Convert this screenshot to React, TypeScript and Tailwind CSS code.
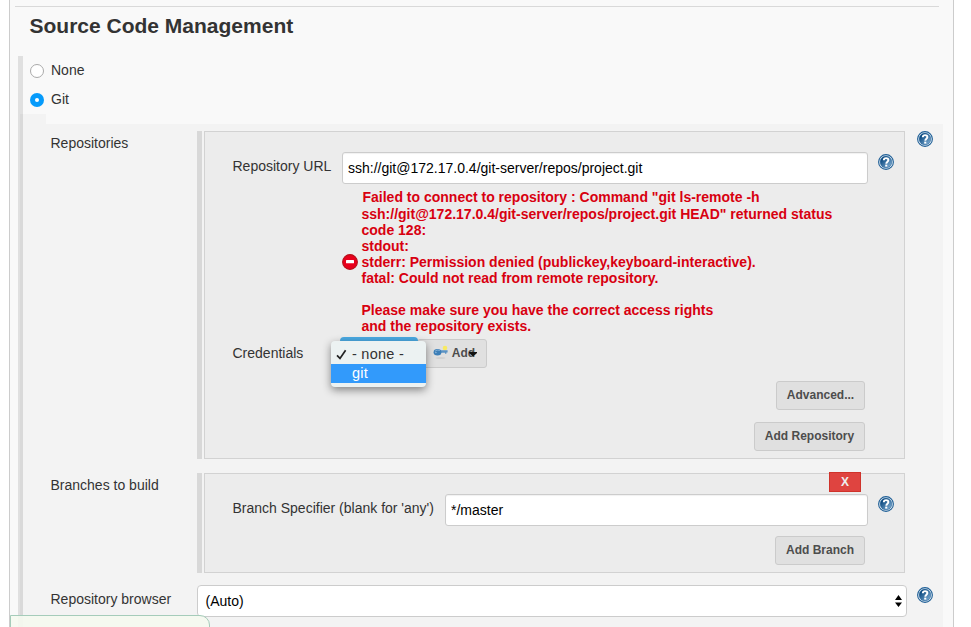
import type { ReactNode } from "react";

function Help() {
  return (
    <svg width="16" height="16" viewBox="0 0 16 16" className="block shrink-0">
      <defs>
        <linearGradient id="help" x1="0" y1="0" x2="1" y2="1">
          <stop offset="0.2" stopColor="#0c4a80" />
          <stop offset="1" stopColor="#8db9dd" />
        </linearGradient>
      </defs>
      <circle cx="8" cy="8" r="7.4" fill="#f4f8fb" stroke="#1f5f96" strokeWidth="1.1" />
      <circle cx="8" cy="8" r="5.9" fill="url(#help)" stroke="#1f5f96" strokeWidth="0.5" />
      <path d="M5.8 6.2C5.8 3.4 10.5 3.5 10.4 6.1C10.4 7.7 8.3 7.7 8.3 9.7" fill="none" stroke="#fff" strokeWidth="1.9" />
      <rect x="7.2" y="10.6" width="2.1" height="2" fill="#fff" />
    </svg>
  );
}

function ErrorIcon() {
  return (
    <svg width="16" height="16" viewBox="0 0 16 16" className="block shrink-0">
      <circle cx="8" cy="8" r="7.4" fill="#e8001c" stroke="#b5121b" strokeWidth="1.1" />
      <rect x="4" y="6" width="8" height="3.2" rx="0.5" fill="#fff" />
    </svg>
  );
}

function KeyIcon() {
  return (
    <svg width="16" height="16" viewBox="0 0 16 16" className="block shrink-0">
      <ellipse cx="7.5" cy="13" rx="5" ry="0.7" fill="#cccccc" />
      <circle cx="12" cy="3" r="2.3" fill="#f8ea62" />
      <path d="M6 5.3H14.6V7.6H13.4V8.8H12V7.8H6Z" fill="#5b93c4" />
      <ellipse cx="4.5" cy="7.3" rx="3.9" ry="3.2" fill="#3d7fb8" />
      <path d="M2 6.2Q4 4.4 7 5.4" fill="none" stroke="#86b3d8" strokeWidth="0.9" />
      <circle cx="2.9" cy="7.6" r="0.7" fill="#a9c9e2" />
    </svg>
  );
}

function Button({ children, className = "" }: { children: ReactNode; className?: string }) {
  return (
    <button className={`flex h-[29px] items-center justify-center rounded-[3px] border border-[#cbcbcb] bg-[#e0e0e0] pb-px text-[12px] font-bold text-[#4d4d4d] ${className}`}>
      {children}
    </button>
  );
}

function Chunk({ children, className = "" }: { children: ReactNode; className?: string }) {
  return (
    <div className={`flex w-[708px] gap-[2px] ${className}`}>
      <div className="w-[5px] bg-[#d8d8d8]" />
      <div className="flex-1 border border-[#d2d2d2] bg-[#ececec]">{children}</div>
    </div>
  );
}

const field = "h-8 rounded-[3px] border border-[#ccc] bg-white px-[5px] text-[14px] text-black shadow-[inset_0_1px_1px_rgba(0,0,0,0.06)]";

export default function App() {
  return (
    <div className="h-[627px] w-[971px] overflow-hidden bg-white pl-[9px] font-['Liberation_Sans',Arial,sans-serif] text-[14px] leading-4 text-[#333]">
      <div className="relative h-full w-[945px] border-x border-[#ccc] bg-[#f9f9f9] pt-[6px]">
        <div className="ml-[5px] h-px w-[924px] bg-[#d9d9d9]" />
        <h1 className="ml-[19.5px] mt-[7px] h-6 whitespace-nowrap text-[21px] font-bold leading-6">Source Code Management</h1>

        <div className="mt-[18px] flex">
          <div className="ml-2 h-[571px] w-[5px] shrink-0 bg-[#e0e0e0] pl-[2px] pt-[58px]">
            <div className="h-full bg-[#d9d9d9]" />
          </div>
          <div className="w-[920px]">
            <div className="flex h-[58px] flex-col pl-[7px] pt-[5px]">
              <label className="flex h-[18px] items-center gap-[7px]">
                <span className="mt-px size-[14px] rounded-full border border-[#aaa] bg-white" />
                None
              </label>
              <label className="mt-[11px] flex h-[18px] items-center gap-[7px]">
                <span className="mt-px flex size-[14px] items-center justify-center rounded-full bg-[#069bfb]">
                  <span className="size-1 rounded-full bg-white" />
                </span>
                Git
              </label>
            </div>
            <div className="h-[10px] w-[23px] bg-[#f3f3f3]" />
            <div className="h-[503px] bg-[#f3f3f3] pt-[7px]">
              <div className="flex h-[328px]">
                <div className="w-[174px] pl-[27.5px] pt-1">Repositories</div>
                <Chunk>
                  <div className="flex pl-[28px] pt-5">
                    <div className="-ml-[0.5px] w-[109.5px] whitespace-nowrap pt-[6px]">Repository URL</div>
                    <input className={`${field} w-[526px]`} defaultValue="ssh://git@172.17.0.4/git-server/repos/project.git" />
                    <div className="ml-[10px] mt-[2px]"><Help /></div>
                  </div>
                  <div className="ml-[137px] mt-[5px] flex h-[145px] items-center gap-[3.5px] whitespace-pre font-bold text-[#d80010]">
                    <div className="mt-px"><ErrorIcon /></div>
                    <div>
                      <div className="h-[17px] pl-px">{'Failed to connect to repository : Command "git ls-remote -h'}</div>
                      {'ssh://git@172.17.0.4/git-server/repos/project.git HEAD" returned status\ncode 128:\nstdout:\nstderr: Permission denied (publickey,keyboard-interactive).\nfatal: Could not read from remote repository.\n\nPlease make sure you have the correct access rights\nand the repository exists.'}
                    </div>
                  </div>
                  <div className="mt-[5px] flex pl-[28px]">
                    <div className="-ml-[0.5px] w-[107.5px] pt-[6px]">Credentials</div>
                    <div className="relative h-[29px] w-[78px]">
                      <div className="-mt-[2px] h-[29px] rounded-[4px] bg-[#4aa9e2]" />
                      <div className="absolute -left-[9px] top-[2px] h-[46px] w-[95px] rounded-[4px] bg-[#ecf2f2] pt-1 text-[14.5px] shadow-[0_3px_8px_rgba(0,0,0,0.45)]">
                        <div className="flex h-[19px] items-center pb-px pl-[5px]">
                          <svg width="11" height="11" viewBox="0 0 11 11" className="mr-[5px]"><path d="M1 6.4L4 9.4L9.6 1.2" fill="none" stroke="#222" strokeWidth="1.7" /></svg>
                          <span className="tracking-[0.25px]">- none -</span>
                        </div>
                        <div className="h-[19px] bg-[#329afb] pl-[21px] leading-[18px] tracking-[0.25px] text-white">git</div>
                      </div>
                    </div>
                    <Button className="-ml-px w-[70px] pl-[6px]">
                      <KeyIcon />
                      <span className="ml-[3px]">Add</span>
                      <svg width="8" height="7" viewBox="0 0 8 7" className="-ml-[6px] mt-px"><path d="M0 2H8V3L4 6.5L0 3Z" fill="#111" /></svg>
                    </Button>
                  </div>
                  <div className="mr-[39px] mt-[13px] flex flex-col items-end gap-3">
                    <Button className="w-[89px]">Advanced...</Button>
                    <Button className="w-[111px]">Add Repository</Button>
                  </div>
                </Chunk>
                <div className="ml-3"><Help /></div>
              </div>

              <div className="mt-[14px] flex h-[100px]">
                <div className="w-[174px] pl-[27.5px] pt-1">Branches to build</div>
                <Chunk className="relative">
                  <div className="flex pl-[28px] pt-5">
                    <div className="-ml-[0.5px] w-[212.5px] whitespace-nowrap pt-[6px]">Branch Specifier (blank for 'any')</div>
                    <input className={`${field} w-[423px]`} defaultValue="*/master" />
                    <div className="ml-[10px] mt-[2px]"><Help /></div>
                  </div>
                  <div className="mr-[39px] mt-[10px] flex justify-end"><Button className="w-[90px]">Add Branch</Button></div>
                  <button className="absolute -top-px right-[44px] h-5 w-8 border border-[#cf332b] bg-[#df4440] text-[12px] font-bold leading-[18px] text-[#eee]">X</button>
                </Chunk>
              </div>

              <div className="mt-3 flex">
                <div className="w-[174px] pl-[27.5px] pt-[6px]">Repository browser</div>
                <div className="flex h-8 w-[710px] items-center justify-between rounded-[4px] border border-[#ccc] bg-white pl-[7.5px] pr-1 text-black">
                  (Auto)
                  <svg width="7" height="12" viewBox="0 0 7 12"><path d="M0 5L3.5 0L7 5ZM0 7.5H7L3.5 12Z" fill="#000" /></svg>
                </div>
                <div className="ml-[10px] mt-[2px]"><Help /></div>
              </div>
            </div>
          </div>
        </div>
        <div className="absolute left-0 top-[615px] h-5 w-[200px] rounded-tr-[10px] border border-[#a5ccba] bg-[#f5f9f0]/90" />
      </div>
    </div>
  );
}
